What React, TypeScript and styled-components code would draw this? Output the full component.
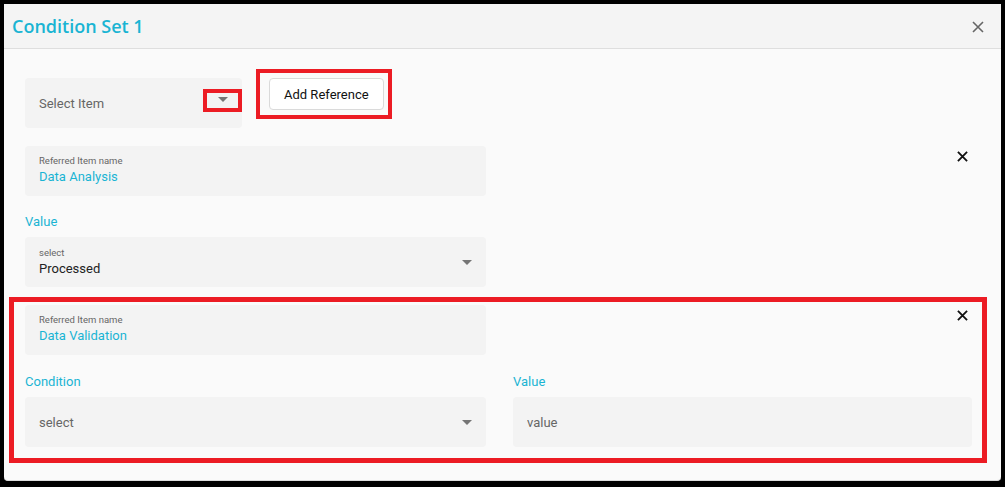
import React from 'react'
import styled, { createGlobalStyle } from 'styled-components'

const accent = '#1ab4d3'
const marker = '#ec1c24'

const GlobalStyle = createGlobalStyle`
  html, body {
    margin: 0;
    padding: 0;
    background: #000;
  }
  body {
    font-family: Roboto, "Liberation Sans", Arial, sans-serif;
  }
`

const CloseIcon = ({ size = 11, color = '#111', weight = 2 }: { size?: number; color?: string; weight?: number }) => (
    <svg width={ size } height={ size } viewBox="0 0 12 12" fill="none">
        <path d="M1 1 L11 11 M11 1 L1 11" stroke={ color } strokeWidth={ weight } />
    </svg>
)

const DropArrow = () => (
    <svg width="10" height="5" viewBox="0 0 10 5">
        <path d="M0 0 L5 5 L10 0 Z" fill="#757575" />
    </svg>
)

const App: React.FunctionComponent = () => (
    <>
        <GlobalStyle />
        <Dialog>
            <Header>
                <Title>Condition Set 1</Title>
                <HeaderClose><CloseIcon size={ 12 } color="#666" weight={ 1.6 } /></HeaderClose>
            </Header>
            <Body>
                <PickerRow>
                    <PickerBox>
                        <Placeholder>Select Item</Placeholder>
                        <ArrowMark><DropArrow /></ArrowMark>
                    </PickerBox>
                    <Highlight>
                        <AddButton>Add Reference</AddButton>
                    </Highlight>
                </PickerRow>

                <ReferenceRow>
                    <Field>
                        <SmallLabel>Referred Item name</SmallLabel>
                        <ItemName>Data Analysis</ItemName>
                    </Field>
                    <RemoveButton><CloseIcon /></RemoveButton>
                </ReferenceRow>
                <FieldTitle>Value</FieldTitle>
                <SelectField>
                    <div>
                        <SmallLabel>select</SmallLabel>
                        <Chosen>Processed</Chosen>
                    </div>
                    <DropArrow />
                </SelectField>

                <MarkedSection>
                    <ReferenceRow>
                        <Field>
                            <SmallLabel>Referred Item name</SmallLabel>
                            <ItemName>Data Validation</ItemName>
                        </Field>
                        <RemoveButton><CloseIcon /></RemoveButton>
                    </ReferenceRow>
                    <Columns>
                        <div>
                            <FieldTitle>Condition</FieldTitle>
                            <SelectField>
                                <Placeholder>select</Placeholder>
                                <DropArrow />
                            </SelectField>
                        </div>
                        <div>
                            <FieldTitle>Value</FieldTitle>
                            <TextInput placeholder="value" />
                        </div>
                    </Columns>
                </MarkedSection>
            </Body>
        </Dialog>
    </>
)

export default App

const Dialog = styled.div`
  margin: 4px 4px 0;
  height: 477px;
  box-sizing: border-box;
  background: #fafafa;
  border-bottom: 1px solid #dcdcdc;
  border-radius: 0 0 4px 4px;
`

const Header = styled.div`
  height: 45px;
  box-sizing: border-box;
  display: flex;
  align-items: center;
  justify-content: space-between;
  padding: 0 17px 0 8px;
  background: #f4f4f4;
  border-bottom: 1px solid #dedede;
`

const Title = styled.h2`
  margin: 0;
  font-family: "Open Sans", "Noto Sans", sans-serif;
  font-size: 18px;
  font-weight: 600;
  color: ${ accent };
`

const HeaderClose = styled.span`
  display: flex;
  margin-top: 1px;
`

const Body = styled.div`
  padding: 29px 29px 0 21px;
`

const PickerRow = styled.div`
  display: flex;
  align-items: flex-start;
  gap: 14px;
`

const PickerBox = styled.div`
  position: relative;
  width: 217px;
  height: 50px;
  box-sizing: border-box;
  display: flex;
  align-items: center;
  padding: 0 14px;
  background: #f3f3f3;
  border-radius: 4px;
`

const ArrowMark = styled.span`
  position: absolute;
  right: 0;
  top: 11px;
  width: 39px;
  height: 23px;
  box-sizing: border-box;
  border: 4px solid ${ marker };
  display: flex;
  align-items: center;
  justify-content: center;
  padding-bottom: 2px;
`

const Highlight = styled.div`
  margin-top: -9px;
  border: 4px solid ${ marker };
  padding: 5px 4px 5px 9px;
`

const AddButton = styled.button`
  height: 32px;
  padding: 0 14px;
  font-family: Roboto, sans-serif;
  font-size: 13px;
  color: #111;
  background: #fff;
  border: 1px solid #dadada;
  border-radius: 4px;
`

const Placeholder = styled.span`
  font-size: 13px;
  color: #666;
`

const ReferenceRow = styled.div`
  display: flex;
  justify-content: space-between;
  align-items: flex-start;
  margin-top: 18px;
`

const Field = styled.div`
  width: 461px;
  height: 50px;
  box-sizing: border-box;
  padding: 9px 14px;
  background: #f3f3f3;
  border-radius: 4px;
`

const SmallLabel = styled.div`
  font-size: 9.5px;
  line-height: 12px;
  color: #666;
`

const ItemName = styled.div`
  margin-top: 2px;
  font-size: 13px;
  line-height: 16px;
  color: ${ accent };
`

const Chosen = styled.div`
  margin-top: 2px;
  font-size: 13px;
  line-height: 16px;
  color: #222;
`

const RemoveButton = styled.span`
  display: flex;
  margin: 5px 4px 0 0;
`

const FieldTitle = styled.div`
  margin: 18px 0 8px;
  font-size: 13px;
  line-height: 15px;
  color: ${ accent };
`

const SelectField = styled.div`
  width: 461px;
  height: 50px;
  box-sizing: border-box;
  display: flex;
  align-items: center;
  justify-content: space-between;
  padding: 0 14px 0 14px;
  background: #f3f3f3;
  border-radius: 4px;
`

const MarkedSection = styled.div`
  margin: 10px -15px 0 -16px;
  border: 5px solid ${ marker };
  padding: 3px 10px 11px 11px;

  & > ${ ReferenceRow } {
    margin-top: 0;
  }
`

const Columns = styled.div`
  display: grid;
  grid-template-columns: 461px 1fr;
  gap: 27px;

  ${ FieldTitle } {
    margin-top: 19px;
  }

  ${ SelectField } {
    width: 100%;
  }
`

const TextInput = styled.input`
  display: block;
  width: 100%;
  height: 50px;
  box-sizing: border-box;
  padding: 0 14px;
  font-family: Roboto, sans-serif;
  font-size: 13px;
  background: #f3f3f3;
  border: none;
  border-radius: 4px;
  outline: none;

  &::placeholder {
    color: #666;
  }
`
